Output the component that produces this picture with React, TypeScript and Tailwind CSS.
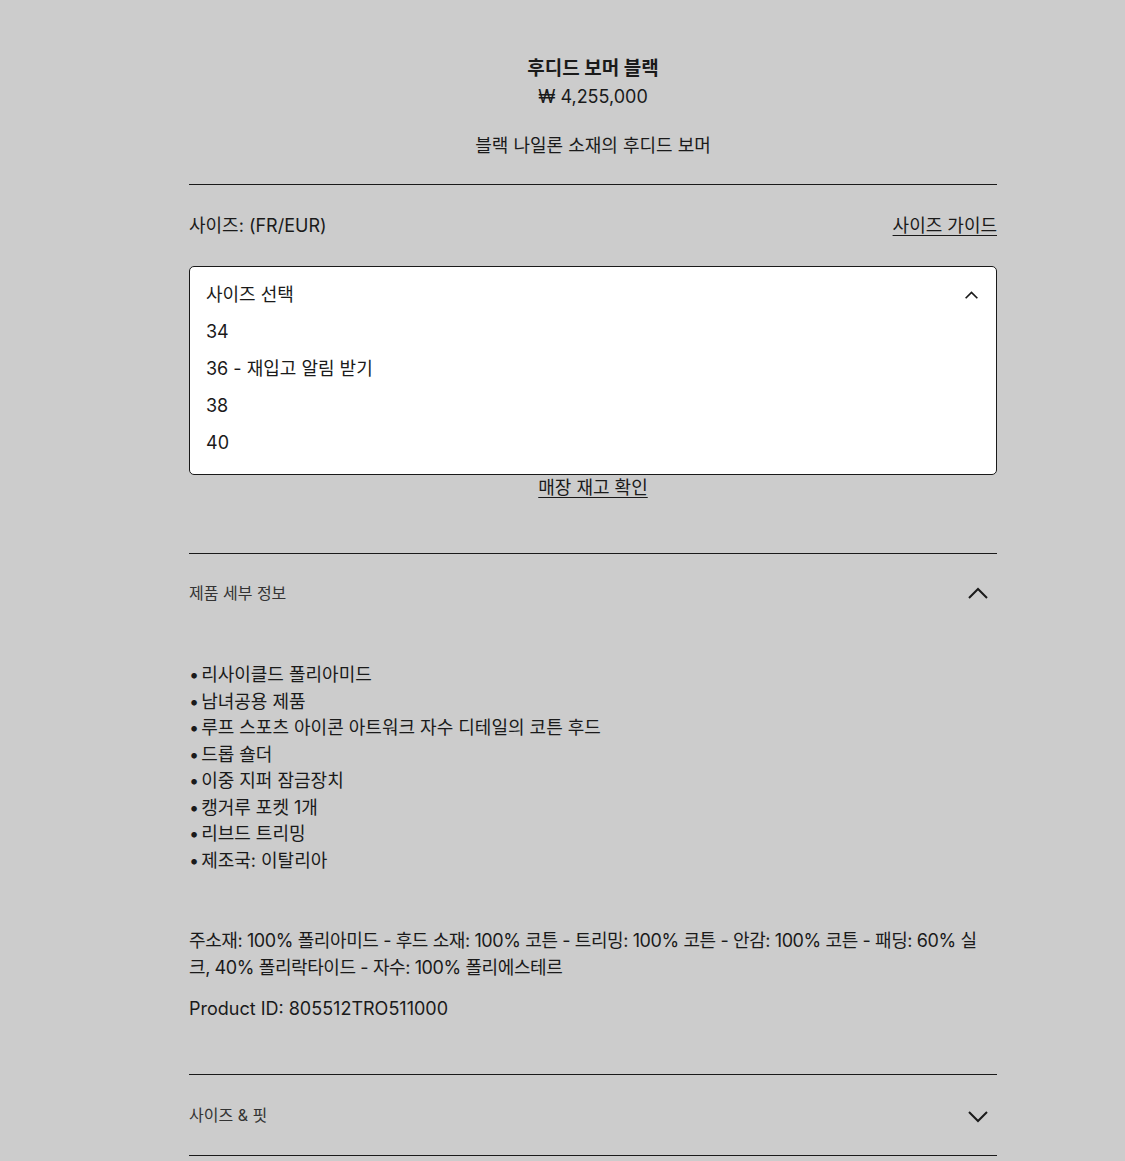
import React from "react";

const font = { fontFamily: '"Inter", "Noto Sans CJK KR", sans-serif' };

function ChevronUp({ className = "", sw = 2 }: { className?: string; sw?: number }) {
  return (
    <svg className={className} viewBox="0 0 20 12" fill="none" stroke="currentColor" strokeWidth={sw} strokeLinecap="butt" strokeLinejoin="miter">
      <path d="M1 11 L10 2 L19 11" />
    </svg>
  );
}
function ChevronDown({ className = "" }: { className?: string }) {
  return (
    <svg className={className} viewBox="0 0 20 12" fill="none" stroke="currentColor" strokeWidth="2" strokeLinecap="butt" strokeLinejoin="miter">
      <path d="M1 1 L10 10 L19 1" />
    </svg>
  );
}

export default function App() {
  const bullets = [
    "리사이클드 폴리아미드",
    "남녀공용 제품",
    "루프 스포츠 아이콘 아트워크 자수 디테일의 코튼 후드",
    "드롭 숄더",
    "이중 지퍼 잠금장치",
    "캥거루 포켓 1개",
    "리브드 트리밍",
    "제조국: 이탈리아",
  ];
  return (
    <div className="min-h-[1161px] bg-[#cccccc] text-[#1a1a1a]" style={font}>
      <div className="ml-[189px] w-[808px] pt-[57px]">
        <div className="flex flex-col items-center">
          <h1 className="text-[19px] font-bold leading-[24px]">후디드 보머 블랙</h1>
          <div className="mt-[4px] text-[18px] leading-[24px]">₩ 4,255,000</div>
          <p className="mt-[25px] text-[18px] leading-[24px]">블랙 나일론 소재의 후디드 보머</p>
        </div>
        <div className="mt-[26px] border-t border-[#1a1a1a]" />
        <div className="mt-[29px] flex items-center justify-between text-[18px] leading-[24px]">
          <span>사이즈: (FR/EUR)</span>
          <a className="underline underline-offset-[3px]">사이즈 가이드</a>
        </div>
        <div className="mt-[28px] h-[209px] rounded-[5px] border border-[#1a1a1a] bg-white px-4 pt-[16px]">
          <div className="flex items-center justify-between text-[18px] leading-[24px]">
            <span>사이즈 선택</span>
            <ChevronUp className="mr-[2px] h-[8px] w-[13px]" sw={2.6} />
          </div>
          <ul className="mt-[13px] flex flex-col gap-[13px] text-[18px] leading-[24px]">
            <li>34</li>
            <li>36 - 재입고 알림 받기</li>
            <li>38</li>
            <li>40</li>
          </ul>
        </div>
        <div className="mt-[1px] flex justify-center">
          <a className="text-[18px] leading-[24px] underline underline-offset-[3px]">매장 재고 확인</a>
        </div>
        <div className="mt-[53px] border-t border-[#1a1a1a]" />
        <div className="flex h-[78px] items-center justify-between">
          <span className="text-[16px] text-[#333333]">제품 세부 정보</span>
          <ChevronUp className="mr-[9px] h-[12px] w-[20px]" />
        </div>
        <ul className="mt-[30px] text-[18px] leading-[26.5px]">
          {bullets.map((b) => (
            <li key={b}>
              •<span className="ml-[2px]">{b}</span>
            </li>
          ))}
        </ul>
        <p className="mt-[54px] text-[18px] leading-[26.5px] tracking-[-0.4px]">
          주소재: 100% 폴리아미드 - 후드 소재: 100% 코튼 - 트리밍: 100% 코튼 - 안감: 100% 코튼 - 패딩: 60% 실크, 40% 폴리락타이드 - 자수: 100% 폴리에스테르
        </p>
        <p className="mt-[15px] text-[18px] leading-[26.5px]">Product ID: 805512TRO511000</p>
        <div className="mt-[51px] border-t border-[#1a1a1a]" />
        <div className="flex h-[80px] items-center justify-between">
          <span className="mt-[1px] text-[16px] text-[#333333]">사이즈 &amp; 핏</span>
          <ChevronDown className="mr-[9px] mt-[5px] h-[12px] w-[20px]" />
        </div>
        <div className="border-t border-[#1a1a1a]" />
      </div>
    </div>
  );
}
